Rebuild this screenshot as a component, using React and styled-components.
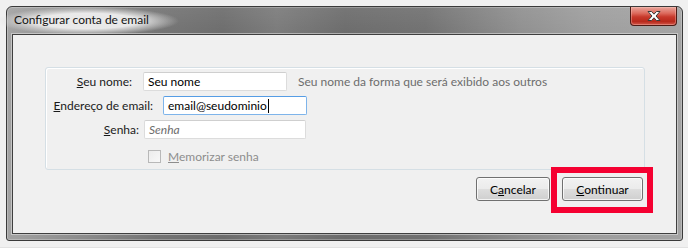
import React from 'react';
import styled, { createGlobalStyle } from 'styled-components';

const GlobalStyle = createGlobalStyle`
  * {
    margin: 0;
    padding: 0;
    box-sizing: border-box;
  }
  body {
    background: #f0f0f0;
    font-family: 'Segoe UI', Lato, 'Noto Sans', sans-serif;
    font-size: 12px;
    color: #1a1a1a;
  }
`;

const Page = styled.div`
  width: 688px;
  height: 248px;
  padding: 6px 0 0 6px;
  border-bottom: 1px solid #e2e2e2;
`;

const Window = styled.div`
  width: 677px;
  height: 235px;
  display: flex;
  flex-direction: column;
  padding: 0 5px 6px 5px;
  border: 1px solid #3a3a3a;
  border-radius: 6px 6px 3px 3px;
  background:
    linear-gradient(to bottom, rgba(255, 255, 255, 0.08), rgba(0, 0, 0, 0) 30px),
    linear-gradient(
      to right,
      #a2a2a2 0%,
      #8a8a8a 12%,
      #747474 22%,
      #6c6c6c 32%,
      #7a7a7a 40%,
      #6b6b6b 50%,
      #707070 62%,
      #8f8f8f 76%,
      #9d9d9d 86%,
      #a3a3a3 100%
    );
  box-shadow: inset 0 0 0 1px rgba(255, 255, 255, 0.25);
`;

const TitleBar = styled.div`
  height: 27px;
  display: flex;
  align-items: flex-start;
  justify-content: space-between;
`;

const Title = styled.span`
  margin: 0 0 0 -16px;
  padding: 5px 30px 8px 18px;
  color: #141414;
  background: radial-gradient(
    closest-side,
    rgba(238, 238, 238, 0.95) 55%,
    rgba(220, 220, 220, 0.55) 78%,
    rgba(200, 200, 200, 0) 100%
  );
`;

const CloseButton = styled.div`
  width: 47px;
  height: 19px;
  display: flex;
  align-items: center;
  justify-content: center;
  border: 1px solid #4e1a14;
  border-top: none;
  border-radius: 0 0 4px 4px;
  background: linear-gradient(
    to bottom,
    #e9a69c 0%,
    #dc6a5c 35%,
    #c7392b 55%,
    #b8291c 80%,
    #d2574a 100%
  );
  box-shadow: inset 0 0 0 1px rgba(255, 210, 200, 0.35);
`;

const Client = styled.div`
  flex: 1;
  display: flex;
  flex-direction: column;
  align-items: flex-start;
  padding: 32px 33px 0 32px;
  background: #f0f0f0;
  border: 1px solid #3f3f3f;
  box-shadow: 0 0 0 1px rgba(230, 230, 230, 0.55);
`;

const GroupBox = styled.div`
  width: 600px;
  height: 103px;
  display: flex;
  flex-direction: column;
  gap: 5px;
  padding-top: 4px;
  border: 1px solid #d5dfe5;
  border-radius: 3px;
  box-shadow: inset 1px 1px 0 #fff;
`;

const Row = styled.div`
  display: flex;
  align-items: center;
  height: 19px;
`;

const Label = styled.label`
  width: ${(p) => p.$width}px;
  padding-right: ${(p) => p.$gap}px;
  text-align: right;
  white-space: nowrap;
`;

const Input = styled.div`
  width: ${(p) => p.$width}px;
  height: 19px;
  display: flex;
  align-items: center;
  padding-left: 4px;
  background: #fff;
  border: 1px solid ${(p) => (p.$focused ? '#7eb4ea' : '#dcdcdc')};
  border-top-color: ${(p) => (p.$focused ? '#569de5' : '#cfcfcf')};
  border-radius: 2px;
  color: ${(p) => (p.$placeholder ? '#6d6d6d' : '#000')};
  font-style: ${(p) => (p.$placeholder ? 'italic' : 'normal')};
`;

const Caret = styled.span`
  width: 1px;
  height: 14px;
  margin-left: 1px;
  background: #000;
`;

const Hint = styled.span`
  margin-left: 11px;
  color: #6d6d6d;
  white-space: nowrap;
`;

const CheckRow = styled.div`
  display: flex;
  align-items: center;
  gap: 7px;
  height: 18px;
  margin-top: 3px;
  padding-left: 102px;
  color: #8d8d8d;
`;

const CheckBox = styled.span`
  width: 13px;
  height: 13px;
  border: 1px solid #b8b8b8;
  background: linear-gradient(135deg, #ececec, #f8f8f8);
`;

const ButtonRow = styled.div`
  align-self: stretch;
  display: flex;
  justify-content: flex-end;
  gap: 12px;
  margin-top: 7px;
`;

const Button = styled.button`
  width: ${(p) => p.$width}px;
  height: 24px;
  font: inherit;
  color: #000;
  border: 1px solid #707070;
  border-radius: 3px;
  background: linear-gradient(
    to bottom,
    #f2f2f2 0%,
    #ebebeb 48%,
    #dddddd 52%,
    #cfcfcf 100%
  );
  box-shadow: inset 0 0 0 1px rgba(255, 255, 255, 0.75);
`;

const Highlight = styled.div`
  position: relative;
`;

const RedFrame = styled.span`
  position: absolute;
  left: -11px;
  right: -10px;
  top: -10px;
  bottom: -12px;
  border: 6px solid #f50031;
  pointer-events: none;
`;

const CloseIcon = () => (
  <svg width="16" height="12" viewBox="0 0 16 12">
    <path
      d="M2 1.5 L5.5 1.5 L8 4.2 L10.5 1.5 L14 1.5 L10 6 L14 10.5 L10.5 10.5 L8 7.8 L5.5 10.5 L2 10.5 L6 6 Z"
      fill="#fff"
      stroke="#3b3b3b"
      strokeWidth="1"
      strokeLinejoin="round"
    />
  </svg>
);

export default function App() {
  return (
    <>
      <GlobalStyle />
      <Page>
        <Window>
          <TitleBar>
            <Title>Configurar conta de email</Title>
            <CloseButton>
              <CloseIcon />
            </CloseButton>
          </TitleBar>
          <Client>
            <GroupBox>
              <Row>
                <Label $width={97} $gap={11}>
                  <u>S</u>eu nome:
                </Label>
                <Input $width={144}>Seu nome</Input>
                <Hint>Seu nome da forma que será exibido aos outros</Hint>
              </Row>
              <Row>
                <Label $width={117} $gap={10}>
                  <u>E</u>ndereço de email:
                </Label>
                <Input $width={144} $focused>
                  email@seudominio
                  <Caret />
                </Input>
              </Row>
              <Row>
                <Label $width={98} $gap={5}>
                  <u>S</u>enha:
                </Label>
                <Input $width={162} $placeholder>
                  Senha
                </Input>
              </Row>
              <CheckRow>
                <CheckBox />
                <span>
                  <u>M</u>emorizar senha
                </span>
              </CheckRow>
            </GroupBox>
            <ButtonRow>
              <Button $width={74}>
                C<u>a</u>ncelar
              </Button>
              <Highlight>
                <Button $width={81}>
                  <u>C</u>ontinuar
                </Button>
                <RedFrame />
              </Highlight>
            </ButtonRow>
          </Client>
        </Window>
      </Page>
    </>
  );
}
